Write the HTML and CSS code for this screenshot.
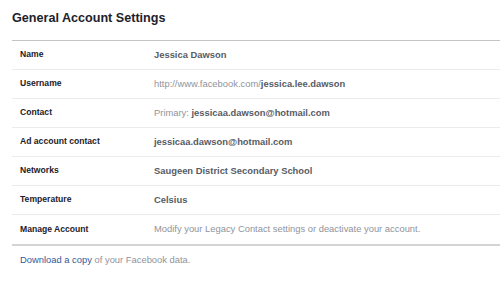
FILE: index.html
```html
<!DOCTYPE html>
<html>
<head>
<meta charset="utf-8">
<link rel="stylesheet" href="styles.css">
</head>
<body>
<div class="page">
  <h1 class="title">General Account Settings</h1>
  <div class="table">
    <div class="row"><div class="label">Name</div><div class="value"><b>Jessica Dawson</b></div></div>
    <div class="row"><div class="label">Username</div><div class="value">http://www.facebook.com/<b>jessica.lee.dawson</b></div></div>
    <div class="row"><div class="label">Contact</div><div class="value">Primary: <b>jessicaa.dawson@hotmail.com</b></div></div>
    <div class="row"><div class="label">Ad account contact</div><div class="value"><b>jessicaa.dawson@hotmail.com</b></div></div>
    <div class="row"><div class="label">Networks</div><div class="value"><b>Saugeen District Secondary School</b></div></div>
    <div class="row"><div class="label">Temperature</div><div class="value"><b>Celsius</b></div></div>
    <div class="row"><div class="label">Manage Account</div><div class="value">Modify your Legacy Contact settings or deactivate your account.</div></div>
  </div>
  <p class="footer"><a class="link" href="#">Download a copy</a> of your Facebook data.</p>
</div>
</body>
</html>
```
FILE: styles.css
```css
html, body {
  margin: 0;
  padding: 0;
  background: #fff;
}
.page {
  padding-left: 12px;
  font-family: "Liberation Sans", Arial, sans-serif;
}
.title {
  margin: 0;
  padding-top: 10px;
  height: 40px;
  box-sizing: border-box;
  font-size: 12.6px;
  line-height: 16px;
  font-weight: bold;
  color: #1d2129;
}
.table {
  border-top: 1px solid #c4c4c4;
  border-bottom: 2px solid #d3d4d6;
}
.row {
  display: flex;
  align-items: center;
  height: 28px;
  border-bottom: 1px solid #ebecee;
}
.row:last-child {
  border-bottom: none;
  height: 29px;
}
.label {
  width: 134px;
  padding-left: 8px;
  padding-bottom: 2px;
  font-size: 8.6px;
  font-weight: bold;
  color: #1d2129;
}
.value {
  font-size: 9.4px;
  padding-bottom: 2px;
  color: #90949c;
}
.value b {
  color: #575c65;
  font-weight: bold;
}
.footer {
  margin: 0;
  padding: 8px 0 0 8px;
  font-size: 9.4px;
  line-height: 12px;
  color: #90949c;
}
.link {
  color: #365899;
  text-decoration: none;
}
```
